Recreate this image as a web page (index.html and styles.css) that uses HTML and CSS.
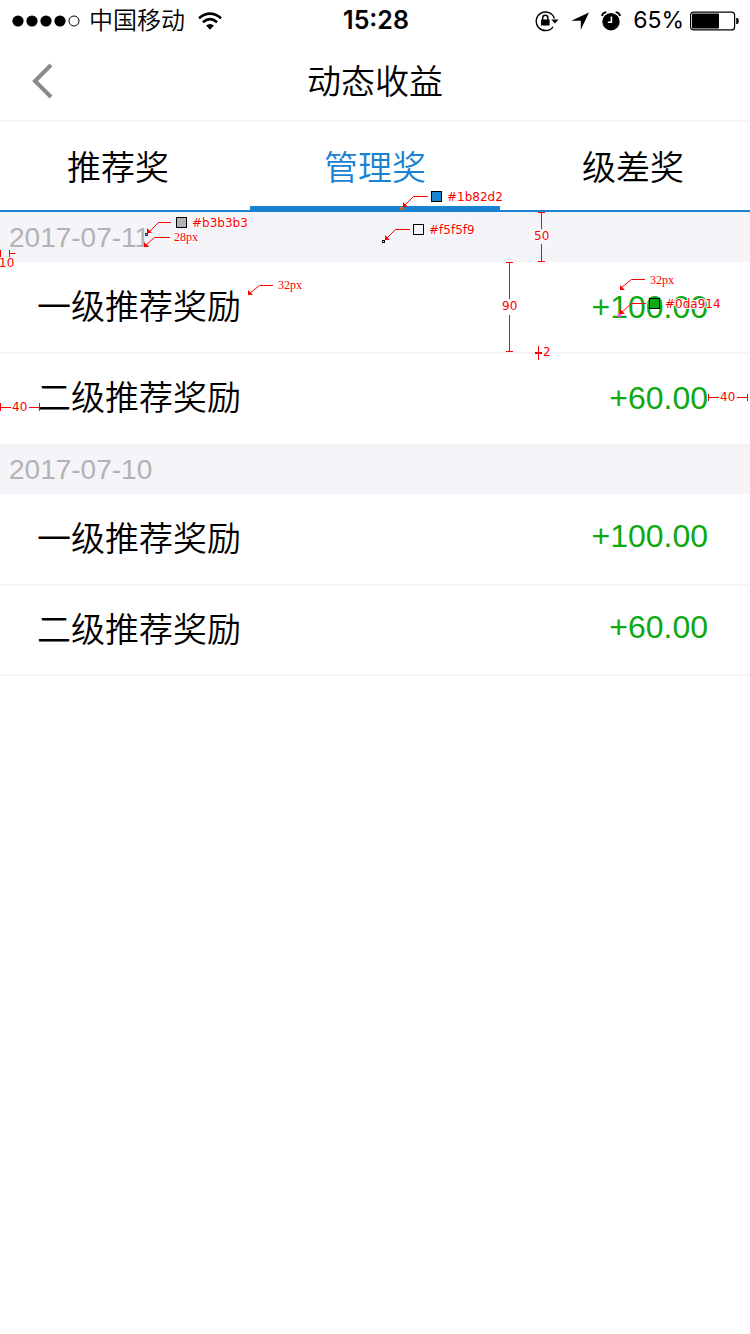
FILE: index.html
```html
<!DOCTYPE html>
<html lang="zh-CN">
<head>
<meta charset="utf-8">
<meta name="viewport" content="width=device-width">
<title>动态收益</title>
<link rel="stylesheet" href="styles.css">
</head>
<body>
<header>
  <div class="status">
    <div class="status-left">
      <svg width="68" height="12" viewBox="0 0 68 12" aria-hidden="true"><circle cx="6" cy="6" r="5.6"/><circle cx="20" cy="6" r="5.6"/><circle cx="34" cy="6" r="5.6"/><circle cx="48" cy="6" r="5.6"/><circle cx="62" cy="6" r="5" fill="none" stroke="#000"/></svg>
      <span class="carrier">中国移动</span>
      <svg class="wifi" width="24" height="18" viewBox="0 0 24 18" fill="none" stroke="#000" stroke-width="2.6" aria-hidden="true"><path d="M1 6.2Q12-2.8 23 6.2M4.9 10.2Q12 4.2 19.1 10.2"/><path d="M8 13.6Q12 10.2 16 13.6L12 17.8z" fill="#000" stroke="none"/></svg>
    </div>
    <time class="clock">15:28</time>
    <div class="status-right">
      <svg width="24" height="22" viewBox="0 0 24 22" aria-hidden="true"><path d="M18 16.800A9.300 9.300 0 1 1 19.400 8.500" fill="none" stroke="#000" stroke-width="1.400"/><path d="M16.200 9.500h7.400L19.900 13.600z"/><path d="M6 9.500h8.600V15.500H6z"/><path d="M7.700 10V7.800a2.600 2.600 0 0 1 5.200 0V10" fill="none" stroke="#000" stroke-width="1.500"/></svg>
      <svg width="18" height="18" viewBox="0 0 18 18" aria-hidden="true"><path d="M18 .4 9.8 17.8V8.8H.3z"/></svg>
      <svg width="20" height="20" viewBox="0 0 20 20" aria-hidden="true"><circle cx="10" cy="10.7" r="8.7"/><path d="M10.4 5.500v5.800H6.800" fill="none" stroke="#fff" stroke-width="1.600"/><path d="M.9 5A5 5 0 0 1 5.300 1.200M14.700 1.200A5 5 0 0 1 19.100 5" fill="none" stroke="#000" stroke-width="1.800"/></svg>
      <span class="percent">65%</span>
      <svg class="battery" width="50" height="20" viewBox="0 0 50 20" aria-hidden="true"><rect x=".6" y="1.1" width="44" height="17.8" rx="3" fill="none" stroke="#000" stroke-width="1.2"/><rect x="2" y="2.5" width="27" height="15" rx="1"/><path d="M46.2 7h1.2q1.4 0 1.4 3t-1.4 3h-1.2z"/></svg>
    </div>
  </div>
  <div class="navbar">
    <button class="back" aria-label="返回"><svg width="22" height="36" viewBox="0 0 22 36"><path d="M20 2 4 18l16 16" fill="none" stroke="#8a8a8a" stroke-width="4"/></svg></button>
    <h1>动态收益</h1>
  </div>
</header>
<nav class="tabs">
  <button class="tab">推荐奖</button>
  <button class="tab active" aria-current="page">管理奖</button>
  <button class="tab">级差奖</button>
</nav>
<main>
  <section class="group">
    <h2>2017-07-11</h2>
    <ul>
      <li><span class="label">一级推荐奖励</span><span class="amount">+100.00</span></li>
      <li><span class="label">二级推荐奖励</span><span class="amount">+60.00</span></li>
    </ul>
  </section>
  <section class="group raised">
    <h2>2017-07-10</h2>
    <ul>
      <li><span class="label">一级推荐奖励</span><span class="amount">+100.00</span></li>
      <li><span class="label">二级推荐奖励</span><span class="amount">+60.00</span></li>
    </ul>
  </section>
</main>
<svg class="notes notes-left" width="310" height="240" viewBox="0 180 310 240">
  <path class="rule" d="M171 222.500H158.500L150 231M170 237.500H154.500L146 245M273 285.500H259.500L250 293M.5 250v7M9.500 250v7M9.500 253.500h6M.5 403v8M1 407.500h10M29 407.500h10M39.500 403v8"/>
  <path class="tip" d="M147 233v-5l5 5zM144 247v-5l5 5zM248 295v-5l5 5z"/>
  <rect x="145.500" y="233.500" width="2" height="2" fill="#b3b3b3" stroke="#333"/>
  <rect x="176.500" y="217.500" width="10" height="10" fill="#b3b3b3" stroke="#000"/>
  <text x="192" y="227">#b3b3b3</text>
  <text class="size" x="174" y="241">28px</text>
  <text class="size" x="278" y="289">32px</text>
  <text x="-1" y="267">10</text>
  <text x="12" y="411">40</text>
</svg>
<svg class="notes notes-mid" width="150" height="240" viewBox="375 180 150 240">
  <path class="rule" d="M428 196.500H413.500L405 205M410 229.500H395.500L387 238M506 262.500h7M509.500 262v37M509.500 315v37M506 351.500h7"/>
  <path class="tip" d="M403 207v-5l5 5zM385 240v-5l5 5z"/>
  <rect x="400.500" y="207.500" width="2" height="2" fill="#1b82d2" stroke="#d06a2d"/>
  <rect x="382.500" y="240.500" width="2" height="2" fill="#fff" stroke="#000"/>
  <rect x="431.500" y="191.500" width="10" height="10" fill="#1b82d2" stroke="#000"/>
  <rect x="413.500" y="224.500" width="10" height="10" fill="#f5f5f9" stroke="#000"/>
  <text x="447" y="201">#1b82d2</text>
  <text x="429" y="234">#f5f5f9</text>
  <text x="502" y="310">90</text>
</svg>
<svg class="notes notes-right" width="225" height="240" viewBox="525 180 225 240">
  <path class="rule" d="M538 212.500h7M541.500 212v17M541.500 244v17M538 261.500h7M538.500 346v14M645 279.500H631.500L622 287M646 303.500H631.500L622 312M708.500 394v7M709 397.500h10M737 397.500h10M747.500 394v7"/>
  <path class="rule thick" d="M535 353h7"/>
  <path class="tip" d="M620 290v-5l5 5zM620 314v-5l5 5z"/>
  <rect x="618.500" y="314.500" width="2" height="2" fill="#c060c0" stroke="#f256eb"/>
  <rect x="649.500" y="298.500" width="10" height="10" fill="#0da914" stroke="#000"/>
  <text x="534" y="240">50</text>
  <text x="543" y="356">2</text>
  <text class="size" x="650" y="284">32px</text>
  <text x="665" y="308">#0da914</text>
  <text x="720" y="401">40</text>
</svg>
</body>
</html>
```
FILE: styles.css
```css
* { box-sizing: border-box; }
body {
  position: relative;
  margin: 0;
  background: #fff;
  color: #000;
  font-family: "Liberation Sans", "Noto Sans CJK SC", sans-serif;
  font-size: 34px;
  font-weight: 350;
}
svg { display: block; flex: none; }
button {
  padding: 0;
  border: 0;
  background: none;
  color: inherit;
  font: inherit;
}
h1, h2, ul { margin: 0; padding: 0; font-weight: inherit; }
.status {
  display: grid;
  grid-template-columns: 1fr auto 1fr;
  align-items: center;
  height: 41px;
  padding: 0 10px 0 12px;
  font-family: Inter, "Noto Sans CJK SC", sans-serif;
  font-size: 24px;
  line-height: 41px;
}
.status-left, .status-right { display: flex; align-items: center; }
.status-left { gap: 9px; }
.wifi { margin-left: 4px; }
.status-right { justify-content: flex-end; gap: 12px; }
.percent { margin-right: -6px; font-size: 23px; font-weight: 400; }
.clock { font-size: 25px; font-weight: 600; }
.navbar {
  display: grid;
  grid-template-columns: 80px 1fr 80px;
  align-items: center;
  height: 81px;
  border-bottom: 2px solid #f5f5f9;
}
.back { padding-left: 31px; }
h1 { padding-top: 2px; font-size: 34px; line-height: 48px; text-align: center; }
.tabs {
  display: grid;
  grid-template-columns: repeat(3, 1fr);
  height: 90px;
  border-bottom: 2px solid #1b82d2;
}
.tab { padding-bottom: 2px; border: solid transparent; border-width: 4px 0; }
.tab:first-child { padding-right: 14px; }
.tab:last-child { padding-left: 16px; }
.tab.active { color: #1b82d2; border-bottom-color: #1b82d2; }
h2 {
  height: 50px;
  padding-left: 9px;
  background: #f5f5f9;
  color: #b3b3b3;
  font-size: 28px;
  font-weight: 400;
  line-height: 52px;
}
ul { list-style: none; }
li {
  display: flex;
  align-items: center;
  justify-content: space-between;
  height: 92px;
  padding: 0 42px 0 37px;
  border-bottom: 2px solid #f5f5f9;
}
li:last-child { height: 90px; }
.group:first-child li:last-child { border-color: #fff; }
.label { padding-bottom: 5px; }
.amount { color: #0da914; font-size: 32px; font-weight: 400; }
.raised .amount { padding-bottom: 6px; }
.notes {
  position: absolute;
  top: 180px;
  overflow: visible;
  pointer-events: none;
}
.notes-left { left: 0; }
.notes-mid { left: 50%; }
.notes-right { right: 0; }
.notes text {
  fill: #f00;
  stroke: #fff;
  stroke-width: 2px;
  paint-order: stroke;
  font-family: "DejaVu Sans", sans-serif;
  font-size: 12px;
  font-weight: 400;
}
.notes .size { font-family: "Liberation Serif", serif; }
.rule { fill: none; stroke: #f00; }
.thick { stroke-width: 2px; }
.tip { fill: #f00; }
```
